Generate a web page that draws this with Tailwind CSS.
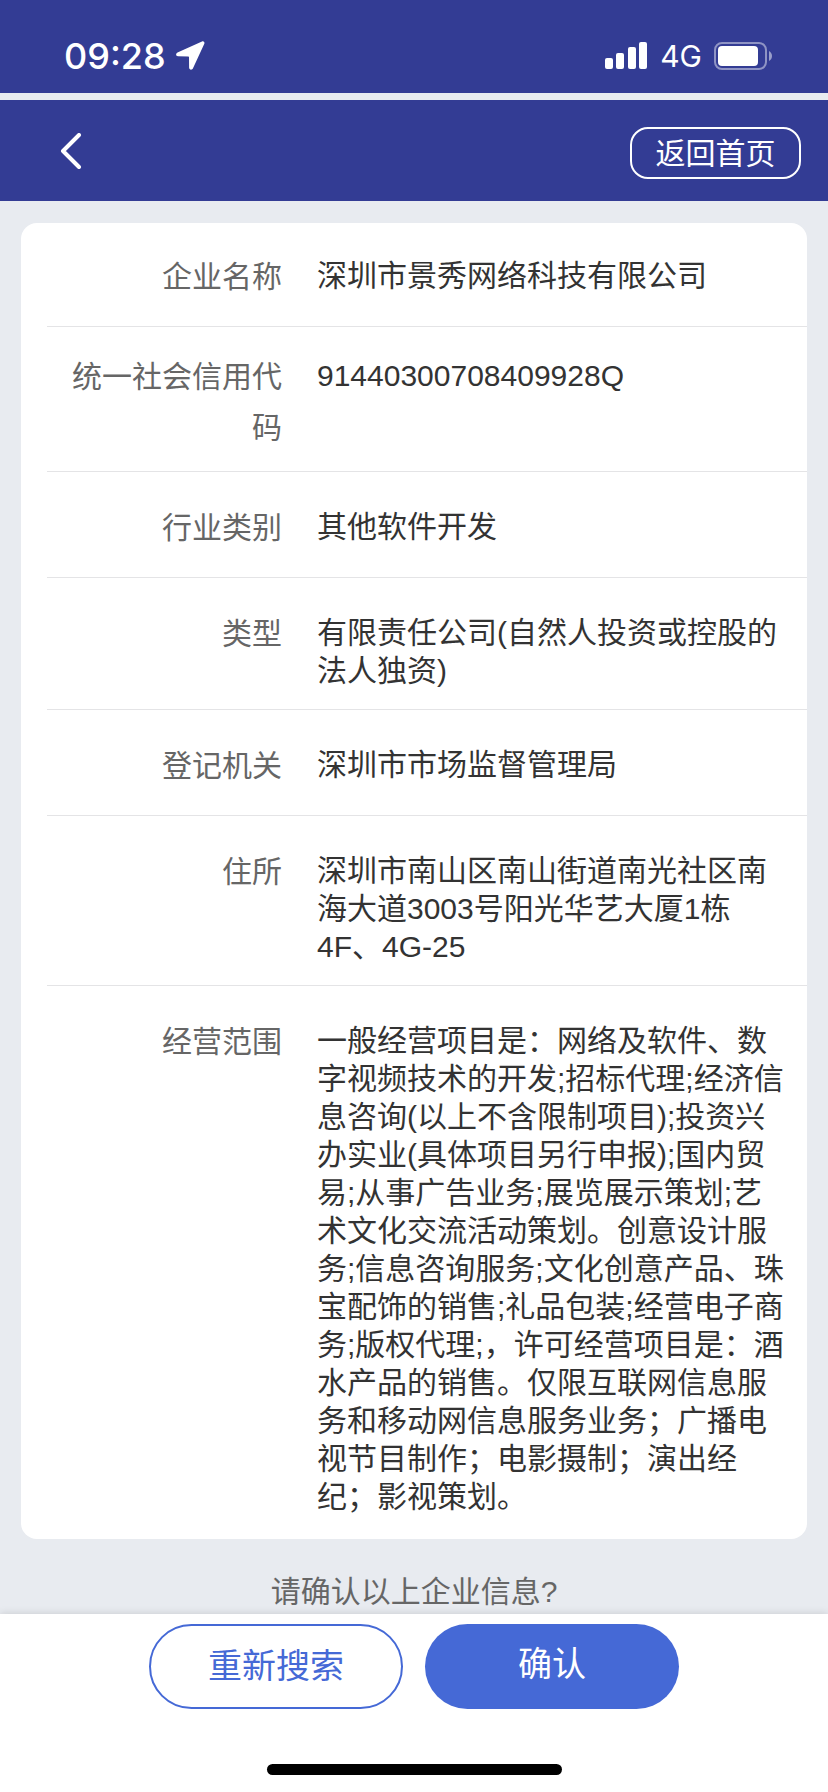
<!DOCTYPE html>
<html lang="zh-CN">
<head>
    <meta charset="UTF-8">
    <meta name="viewport" content="width=device-width, initial-scale=1.0">
    <title>企业信息确认</title>
    <script src="https://cdn.jsdelivr.net/npm/@tailwindcss/browser@4"></script>
</head>
<body class="bg-[#e8ebf0] font-['Liberation_Sans','Noto_Sans_CJK_SC',sans-serif] text-[30px] text-[#333333]">
    <div class="min-h-screen flex flex-col">
        <!-- Status bar -->
        <div class="h-[93px] bg-[#333c94] text-white flex items-center justify-between pt-[18px] pl-16 pr-[55px] font-['Inter',sans-serif]">
            <div class="flex items-center gap-[10px]">
                <span class="text-[36px] leading-[38px] font-medium">09:28</span>
                <svg class="w-[29px] h-[29px]" viewBox="0 0 29 29" fill="currentColor">
                    <path d="M26 .4 1.500 11.600C-.6 12.700-.2 15.300 2 15.300L12.300 15.500C12.700 15.500 13 15.700 13 16.100L13.100 26.500C13.200 29 16 29.400 17 27.200L28.200 3C29 1.200 27.700-.3 26 .4Z"/>
                </svg>
            </div>
            <div class="flex items-center">
                <svg class="w-[43px] h-[27px]" viewBox="0 0 43 27" fill="currentColor">
                    <rect x="0" y="16" width="8" height="11" rx="2"/>
                    <rect x="11" y="11" width="8" height="16" rx="2"/>
                    <rect x="23" y="5" width="8" height="22" rx="2"/>
                    <rect x="34" y="0" width="8" height="27" rx="2"/>
                </svg>
                <span class="ml-3 text-[30px] leading-[38px]">4G</span>
                <svg class="ml-3 w-[59px] h-7" viewBox="0 0 59 28">
                    <rect x="1" y="1" width="51" height="26" rx="7" fill="none" stroke="#fff" stroke-opacity=".45" stroke-width="2"/>
                    <rect x="4" y="4" width="40" height="20" rx="4" fill="#fff"/>
                    <path d="M55 9C59 11 59 17 55 19Z" fill="#fff" fill-opacity=".5"/>
                </svg>
            </div>
        </div>

        <!-- Nav bar -->
        <header class="mt-[7px] h-[101px] bg-[#333c94] text-white flex items-center justify-between pl-[59px] pr-[27px] pt-1">
            <button type="button" aria-label="返回">
                <svg class="w-6 h-10" viewBox="0 0 24 40" fill="none" stroke="currentColor" stroke-width="4" stroke-linecap="round" stroke-linejoin="round">
                    <path d="M20 2 4 18 20 34"/>
                </svg>
            </button>
            <a href="#" class="border-2 border-white rounded-[18px] h-[52px] w-[171px] leading-[50px] text-center">返回首页</a>
        </header>

        <main class="px-[21px] pt-[22px]">
            <!-- Company info -->
            <dl class="bg-white rounded-2xl pl-[26px] pb-1">
                <div class="flex gap-[35px] border-b border-[#e4e4e6]">
                    <dt class="w-[235px] shrink-0 text-right text-[#666666] leading-[51px] pt-7 pb-6">企业名称</dt>
                    <dd class="flex-1 leading-[38px] pt-[34px] pr-4">深圳市景秀网络科技有限公司</dd>
                </div>
                <div class="flex gap-[35px] border-b border-[#e4e4e6]">
                    <dt class="w-[235px] shrink-0 text-right text-[#666666] leading-[51px] pt-6 pb-[18px]">统一社会信用代码</dt>
                    <dd class="flex-1 leading-[38px] pt-[30px] pr-4">91440300708409928Q</dd>
                </div>
                <div class="flex gap-[35px] border-b border-[#e4e4e6]">
                    <dt class="w-[235px] shrink-0 text-right text-[#666666] leading-[51px] pt-[30px] pb-6">行业类别</dt>
                    <dd class="flex-1 leading-[38px] pt-9 pb-[19px] pr-4">其他软件开发</dd>
                </div>
                <div class="flex gap-[35px] border-b border-[#e4e4e6]">
                    <dt class="w-[235px] shrink-0 text-right text-[#666666] leading-[51px] pt-[30px] pb-6">类型</dt>
                    <dd class="flex-1 leading-[38px] pt-9 pb-[19px] pr-4">有限责任公司(自然人投资或控股的法人独资)</dd>
                </div>
                <div class="flex gap-[35px] border-b border-[#e4e4e6]">
                    <dt class="w-[235px] shrink-0 text-right text-[#666666] leading-[51px] pt-[30px] pb-6">登记机关</dt>
                    <dd class="flex-1 leading-[38px] pt-9 pb-[19px] pr-4">深圳市市场监督管理局</dd>
                </div>
                <div class="flex gap-[35px] border-b border-[#e4e4e6]">
                    <dt class="w-[235px] shrink-0 text-right text-[#666666] leading-[51px] pt-[30px] pb-6">住所</dt>
                    <dd class="flex-1 leading-[38px] pt-9 pb-[19px] pr-4">深圳市南山区南山街道南光社区南海大道3003号阳光华艺大厦1栋4F、4G-25</dd>
                </div>
                <div class="flex gap-[35px]">
                    <dt class="w-[235px] shrink-0 text-right text-[#666666] leading-[51px] pt-[30px] pb-6">经营范围</dt>
                    <dd class="flex-1 leading-[38px] pt-9 pb-[19px] pr-4">一般经营项目是：网络及软件、数字视频技术的开发;招标代理;经济信息咨询(以上不含限制项目);投资兴办实业(具体项目另行申报);国内贸易;从事广告业务;展览展示策划;艺术文化交流活动策划。创意设计服务;信息咨询服务;文化创意产品、珠宝配饰的销售;礼品包装;经营电子商务;版权代理;，许可经营项目是：酒水产品的销售。仅限互联网信息服务和移动网信息服务业务；广播电视节目制作；电影摄制；演出经纪；影视策划。</dd>
                </div>
            </dl>
            <p class="mt-[34px] text-center text-[#666666] leading-[38px]">请确认以上企业信息?</p>
        </main>

        <!-- Bottom actions -->
        <footer class="sticky bottom-0 mt-auto bg-white shadow-[0_0_8px_rgba(0,0,0,0.15)] pt-[10px] pb-[17px]">
            <div class="flex justify-center gap-[22px] text-[34px]">
                <button type="button" class="w-[254px] h-[85px] rounded-full border-2 border-[#4569d6] text-[#4569d6]">重新搜索</button>
                <button type="button" class="w-[254px] h-[85px] rounded-full bg-[#4569d6] text-white pb-1">确认</button>
            </div>
            <div class="mt-[55px] mx-auto w-[295px] h-[11px] rounded-full bg-black"></div>
        </footer>
    </div>
</body>
</html>
